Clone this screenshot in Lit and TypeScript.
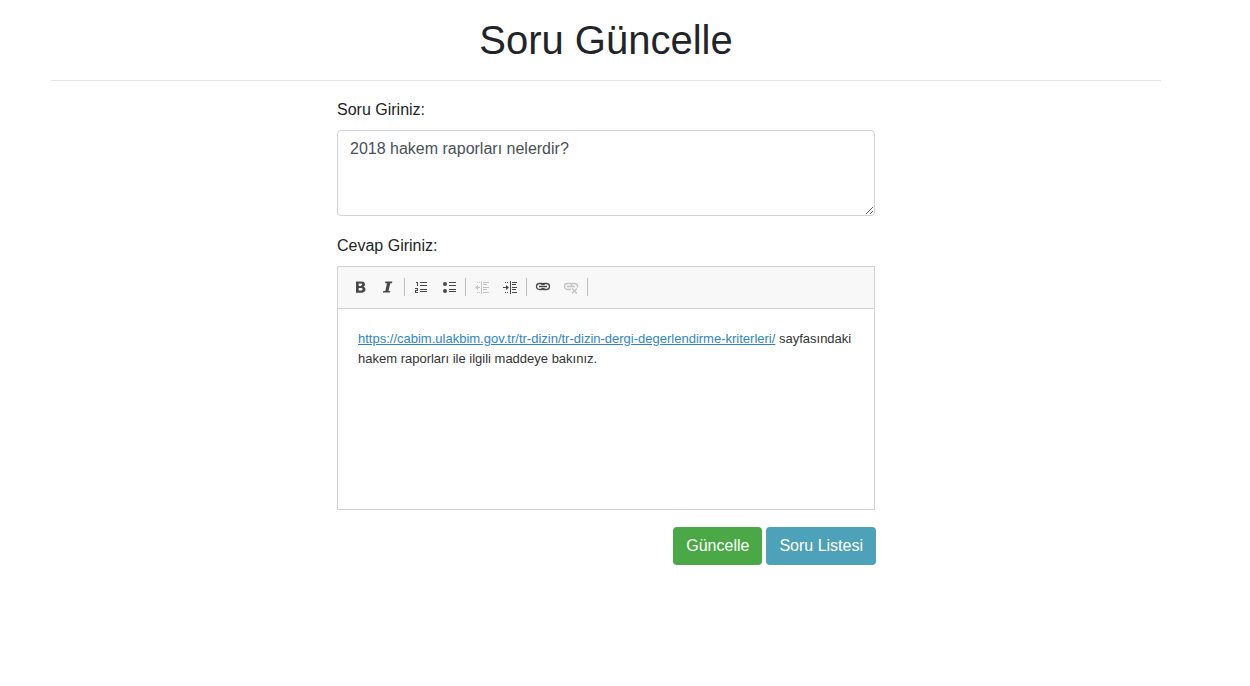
import { LitElement, html, css, svg } from "lit";
import { customElement } from "lit/decorators.js";

const icons = {
  bold: svg`<path d="M4 2.500h5c2.800 0 4 1.200 4 2.900 0 1.200-.7 2.100-1.700 2.400 1.300.3 2.200 1.200 2.200 2.700 0 2-1.500 3.200-4.300 3.200H4zM6.700 4.600v2.300h1.900c1 0 1.600-.4 1.600-1.200 0-.8-.6-1.100-1.600-1.100zM6.700 8.900v2.700h2.100c1.200 0 1.800-.4 1.800-1.300s-.6-1.400-1.800-1.400z" fill-rule="evenodd"/>`,
  italic: svg`<path d="M5.400 2.500h7l-.4 1.700h-1.700L8.500 11.900h1.700l-.4 1.700H2.900l.4-1.700h2L7 4.200H5z"/>`,
  numbered: svg`<path d="M7 3h7v1H7zM7 6h7v1H7zM7 10h7v1H7zM7 12h7v1H7zM3 3h2v4H4V4H3zM2 9h3v3H3v1h2v1H2v-3h2v-1H2z"/>`,
  bulleted: svg`<circle cx="4" cy="5" r="2"/><circle cx="4" cy="12" r="2"/><path d="M8 3h7v1H8zM8 6h7v1H8zM8 10h7v1H8zM8 12h7v1H8z"/>`,
  outdent: svg`<path d="M7 2h1v13H7zM9 3h6v1H9zM9 5h4v1H9zM9 8h6v1H9zM9 10h4v1H9zM9 13h6v1H9zM3 3h1v1H3zM5 3h1v1H5zM3 13h1v1H3zM5 13h1v1H5zM1 8.500l3-2.500v2h2v1H4v2z"/>`,
  indent: svg`<path d="M8 2h1v13H8zM10 3h5v1h-5zM10 5h4v1h-4zM10 8h5v1h-5zM10 10h4v1h-4zM10 13h5v1h-5zM3 3h1v1H3zM5 3h1v1H5zM3 13h1v1H3zM5 13h1v1H5zM7 8.500L4 6v2H1v1h3v2z"/>`,
  link: svg`<g fill="none" stroke="currentColor"><rect x="1.500" y="4.500" width="8" height="6" rx="3" stroke-width="1.300"/><rect x="6.500" y="4.500" width="8" height="6" rx="3" stroke-width="1.300"/><path d="M4 7.500h8" stroke="#f8f8f8" stroke-width="3"/><path d="M4 7.500h8" stroke-width="1.500"/></g>`,
  unlink: svg`<g fill="none" stroke="currentColor" stroke-width="1.300"><path d="M8 10.500H4.500a3 3 0 0 1 0-6h3l1 1 1-1h2a3 3 0 0 1 3 3v1M4 7.500h8M8.500 5v2M9 9.500l5 5"/><path d="M14 9.500l-5 5" /></g>`,
};

@customElement("app-root")
export class AppRoot extends LitElement {
  static styles = css`
    :host {
      display: block;
      padding: 16px 38px 16px 0;
      font: 16px/24px "Liberation Sans", Arial, sans-serif;
      color: #212529;
    }
    * { box-sizing: border-box; }
    .container { max-width: 1110px; margin: 0 auto; }
    .title { margin: 0; font-size: 40px; line-height: 48px; font-weight: 400; text-align: center; }
    .rule { margin: 16px 0; border: 0; border-top: 1px solid #e5e5e5; }
    .form { max-width: 540px; margin: 0 auto; display: grid; gap: 16px; }
    .field { padding: 1px; display: grid; gap: 8px; }
    .field + .field { margin-top: -1px; padding-top: 2px; }
    .question {
      display: block; width: 100%; margin: 0; padding: 6px 12px; resize: vertical;
      font: inherit; color: #495057; background: #fff; border: 1px solid #ced4da; border-radius: 4px;
    }
    .editor { border: 1px solid #d1d1d1; }
    .toolbar {
      display: flex; align-items: center; padding: 7px 8px 8px;
      background: #f8f8f8; border-bottom: 1px solid #d1d1d1;
    }
    .tool { display: flex; padding: 5px 6px; border: 0; background: none; color: #484848; }
    .tool:disabled { opacity: 0.3; }
    .icon { display: block; width: 16px; height: 16px; fill: currentColor; }
    .divider { width: 1px; height: 18px; margin: 0 2px; background: #bcbcbc; }
    .answer { min-height: 200px; padding: 20px; font-size: 13px; line-height: 20px; color: #333; outline: none; }
    .answer p { margin: 0; }
    .answer a { color: #2f85c8; }
    .actions { display: flex; justify-content: flex-end; gap: 4px; }
    .btn {
      padding: 6px 12px; border: 1px solid transparent; border-radius: 4px;
      font: inherit; color: #fff; text-decoration: none;
    }
    .save { background: #4aa846; }
    .list { background: #4da1b9; }
  `;

  private tool(label: string, icon: keyof typeof icons, disabled = false) {
    return html`<button class="tool" type="button" aria-label=${label} ?disabled=${disabled}>
      <svg class="icon" viewBox="0 0 16 16" aria-hidden="true">${icons[icon]}</svg>
    </button>`;
  }

  render() {
    const divider = html`<span class="divider"></span>`;
    return html`<main class="container">
      <h1 class="title">Soru Güncelle</h1>
      <hr class="rule" />
      <form class="form">
        <div class="field">
          <label for="question">Soru Giriniz:</label>
          <textarea class="question" id="question" rows="3" .value=${"2018 hakem raporları nelerdir?"}></textarea>
        </div>
        <div class="field">
          <label id="answer-label">Cevap Giriniz:</label>
          <div class="editor">
            <div class="toolbar" role="toolbar">
              ${this.tool("Kalın", "bold")}${this.tool("İtalik", "italic")}${divider}
              ${this.tool("Numaralı liste", "numbered")}${this.tool("Madde listesi", "bulleted")}${divider}
              ${this.tool("Girintiyi azalt", "outdent", true)}${this.tool("Girintiyi artır", "indent")}${divider}
              ${this.tool("Bağlantı", "link")}${this.tool("Bağlantıyı kaldır", "unlink", true)}${divider}
            </div>
            <div class="answer" contenteditable="true" spellcheck="false" role="textbox" aria-multiline="true" aria-labelledby="answer-label">
              <p><a href="https://cabim.ulakbim.gov.tr/tr-dizin/tr-dizin-dergi-degerlendirme-kriterleri/">https://cabim.ulakbim.gov.tr/tr-dizin/tr-dizin-dergi-degerlendirme-kriterleri/</a> sayfasındaki hakem raporları ile ilgili maddeye bakınız.</p>
            </div>
          </div>
        </div>
        <div class="actions">
          <button class="btn save" type="button">Güncelle</button>
          <a class="btn list" href="#">Soru Listesi</a>
        </div>
      </form>
    </main>`;
  }
}
